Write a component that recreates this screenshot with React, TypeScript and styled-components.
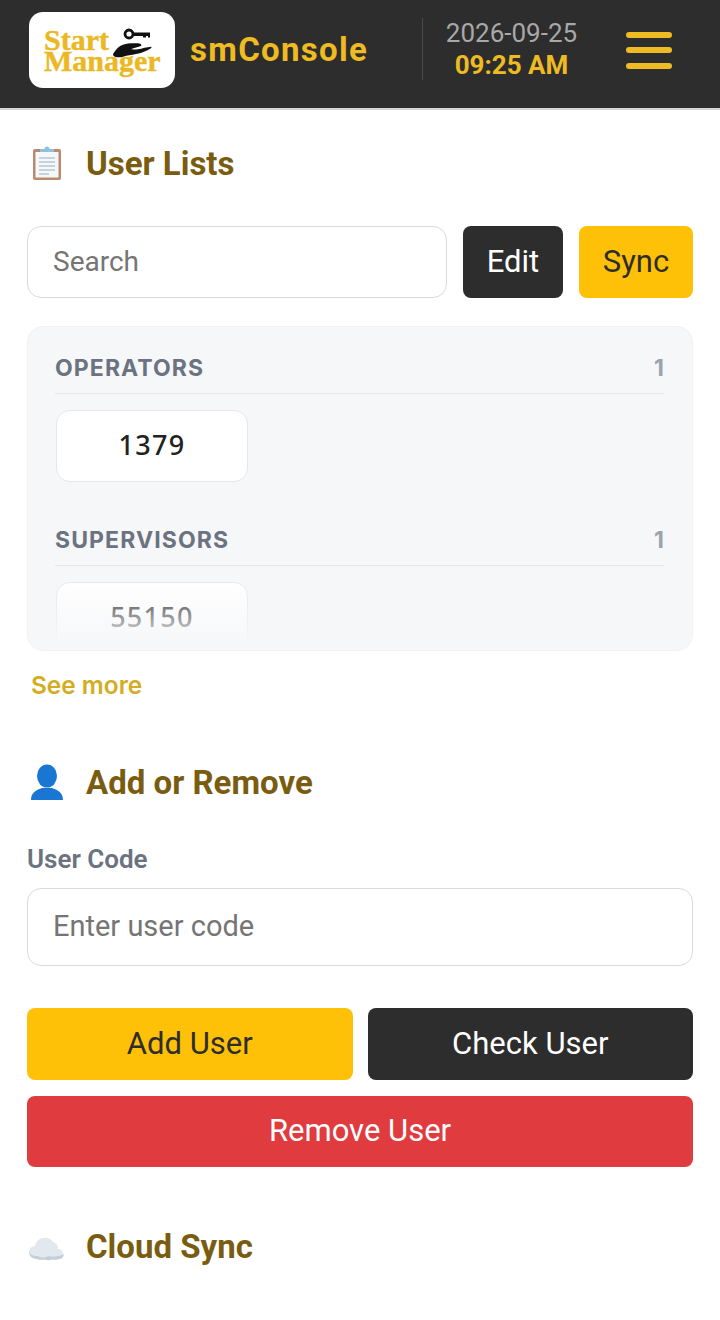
import styled, { createGlobalStyle } from 'styled-components';

const GlobalStyle = createGlobalStyle`
  * {
    box-sizing: border-box;
  }

  html,
  body {
    margin: 0;
    background: #fff;
    font-family: Roboto, 'Liberation Sans', sans-serif;
  }

  input::placeholder {
    color: #757575;
    opacity: 1;
  }
`;

const Page = styled.div`
  width: 720px;
  height: 1320px;
  overflow: hidden;
  background: #fff;
`;

const Header = styled.header`
  display: flex;
  align-items: center;
  height: 110px;
  padding: 0 48px 8px 29px;
  background: #2d2d2d;
  border-bottom: 2px solid #d4d4d4;
`;

const LogoBox = styled.div`
  position: relative;
  flex: none;
  width: 146px;
  height: 76px;
  background: #fff;
  border-radius: 14px;
`;

const LogoLine = styled.span<{ $top: number }>`
  position: absolute;
  top: ${(p) => p.$top}px;
  left: 15px;
  font-family: 'Liberation Serif', serif;
  font-weight: 700;
  font-size: 30px;
  line-height: 21px;
  color: #ebb823;
  -webkit-text-stroke: 0.4px #ebb823;
  white-space: nowrap;
`;

const LogoArt = styled.svg`
  position: absolute;
  top: 15px;
  left: 84px;
`;

const AppName = styled.div`
  flex: none;
  width: 232px;
  margin-left: 15px;
  padding-bottom: 2px;
  font-size: 33px;
  font-weight: 700;
  letter-spacing: 1.3px;
  color: #eebb22;
`;

const DateBlock = styled.div`
  flex: none;
  display: flex;
  flex-direction: column;
  align-items: center;
  width: 178px;
  height: 62px;
  margin-bottom: 2px;
  border-left: 1px solid #4a4a4a;
  line-height: 31px;
`;

const DateText = styled.span`
  font-size: 26px;
  color: #a8a8a8;
`;

const TimeText = styled.span`
  font-size: 26px;
  font-weight: 700;
  color: #eebb22;
  margin-top: 1px;
`;

const MenuIcon = styled.div`
  flex: none;
  display: flex;
  flex-direction: column;
  gap: 9.5px;
  width: 46px;
  margin-left: auto;
`;

const MenuBar = styled.span`
  height: 6px;
  border-radius: 3px;
  background: #eebb22;
`;

const Content = styled.main`
  padding: 0 27px;
`;

const SectionHead = styled.div<{ $top: number }>`
  display: flex;
  align-items: center;
  gap: 23px;
  height: 40px;
  margin-top: ${(p) => p.$top}px;
`;

const SectionIcon = styled.svg`
  flex: none;
  width: 36px;
  height: 38px;
  overflow: visible;
`;

const SectionTitle = styled.h2`
  margin: 0;
  font-size: 33px;
  font-weight: 700;
  color: #7a5c10;
`;

const Toolbar = styled.div`
  display: flex;
  gap: 16px;
  margin-top: 43px;
`;

const TextField = styled.input<{ $height: number; $size: number }>`
  flex: 1;
  min-width: 0;
  width: 100%;
  height: ${(p) => p.$height}px;
  padding: 0 25px 2px;
  border: 1px solid #d6d9de;
  border-radius: 14px;
  background: #fff;
  font-family: inherit;
  font-size: ${(p) => p.$size}px;
  color: #333;
  outline: none;
`;

const variants = {
  dark: 'background: #2d2d2d; color: #fff;',
  yellow: 'background: #ffc107; color: #2d2d2d;',
  red: 'background: #e03b3e; color: #fff;',
};

const Button = styled.button<{ $variant: keyof typeof variants; $width?: number }>`
  flex: ${(p) => (p.$width ? 'none' : '1')};
  width: ${(p) => (p.$width ? `${p.$width}px` : 'auto')};
  height: 72px;
  padding: 0 0 2px;
  border: none;
  border-radius: 8px;
  font-family: inherit;
  font-size: 31px;
  ${(p) => variants[p.$variant]}
`;

const ListPanel = styled.section`
  position: relative;
  height: 325px;
  margin-top: 28px;
  padding: 20px 28px 0 27px;
  overflow: hidden;
  background: #f6f7f9;
  border: 1px solid #f1f2f4;
  border-radius: 16px;

  &::after {
    content: '';
    position: absolute;
    left: 0;
    right: 0;
    bottom: 0;
    height: 70px;
    background: linear-gradient(to bottom, rgba(246, 247, 249, 0), #f6f7f9 95%);
  }
`;

const GroupHead = styled.div<{ $top?: number }>`
  display: flex;
  align-items: center;
  justify-content: space-between;
  height: 47px;
  margin-top: ${(p) => p.$top ?? 0}px;
  padding-bottom: 5px;
  border-bottom: 1px solid #e5e7eb;
  font-family: Inter, sans-serif;
  font-size: 23px;
  font-weight: 700;
  letter-spacing: 1.1px;
  color: #6b7280;
`;

const GroupCount = styled.span`
  color: #9ca3af;
  letter-spacing: 0;
`;

const Chip = styled.div`
  display: flex;
  align-items: center;
  justify-content: center;
  width: 192px;
  height: 72px;
  margin: 16px 0 0 1px;
  padding-bottom: 4px;
  background: #fff;
  border: 1px solid #e5e7eb;
  border-radius: 14px;
  font-family: 'Noto Sans', sans-serif;
  font-size: 27px;
  font-weight: 500;
  letter-spacing: 1.3px;
  color: #222;
`;

const SeeMore = styled.div`
  margin: 18px 0 0 4px;
  font-family: Inter, sans-serif;
  font-size: 24.4px;
  font-weight: 600;
  line-height: 32px;
  color: #d4ac1e;
`;

const FieldLabel = styled.label`
  display: block;
  margin-top: 41px;
  margin-bottom: 13px;
  font-size: 26px;
  font-weight: 600;
  line-height: 32px;
  color: #6b7280;
`;

const ButtonRow = styled.div`
  display: flex;
  gap: 15px;
  margin-top: 42px;
`;

const RemoveButton = styled(Button)`
  display: block;
  width: 100%;
  height: 71px;
  margin-top: 16px;
`;

function ClipboardIcon() {
  return (
    <SectionIcon viewBox="0 0 36 38">
      <rect x="6" y="5" width="28" height="31" rx="2" fill="#b98a6d" />
      <rect x="8.500" y="8" width="23" height="25.500" fill="#f4f8fb" />
      <path d="M12 14h16M12 18h16M12 22h16M12 26h16M12 30h10" stroke="#b7c6d6" strokeWidth="1.300" />
      <path d="M13 8V5h4.500a2.500 2.500 0 0 1 5 0H27v3z" fill="#8fc0dc" />
    </SectionIcon>
  );
}

function PersonIcon() {
  return (
    <SectionIcon viewBox="0 0 36 38">
      <ellipse cx="20" cy="13" rx="10" ry="11.500" fill="#1976d2" />
      <path d="M4 37c0-8 6-10 11-12h10c5 2 11 4 11 12z" fill="#1976d2" />
    </SectionIcon>
  );
}

function CloudIcon() {
  return (
    <SectionIcon viewBox="0 0 36 38">
      <path
        d="M7 31a6 6 0 0 1-5-6 6 6 0 0 1 6-6 10 10 0 0 1 18-4 7 7 0 0 1 5 7 5 5 0 0 1 5 5 4 4 0 0 1-4 4c-3 1-5 1-7 .500-2 1-5 1-7 0-3 .500-6 .500-11-.500z"
        fill="#e2e8ee"
      />
      <path d="M2 25c2 4 6 4 9 4 3 2 7 2 10 0 4 1 11 1 16-2-.500 3-2 5-5 5-3 1-5 1-7 .500-2 1-5 1-7 0-3 .500-6 .500-11-1-3-1-5-3-5-6.500z" fill="#c3ced8" />
    </SectionIcon>
  );
}

export default function App() {
  return (
    <Page>
      <GlobalStyle />
      <Header>
        <LogoBox>
          <LogoLine $top={17}>Start</LogoLine>
          <LogoLine $top={38}>Manager</LogoLine>
          <LogoArt width="50" height="44" viewBox="0 0 50 44">
            <circle cx="16" cy="7" r="4" fill="none" stroke="#111" strokeWidth="2.800" />
            <path d="M20 5.500h17v5h-2V9h-2v1.500h-3V9H20z" fill="#111" />
            <path d="M0 27C3 22 6 19 10 17.700 15 16 20 16 25 16.300 27 16.500 29 17.500 28.300 18.700 25 20 21 21 18.300 22 21 23 23 22.500 25 22.300 29 21.500 34 20 38.300 19.700 39 20.500 38 21.500 36.700 22 33 24 30 25.500 26.700 26.300 22 27.500 17 28 13.300 28.700 11 29.500 9 30.300 6.700 30.300 3 30.300 0 30 0 27z" fill="#111" />
          </LogoArt>
        </LogoBox>
        <AppName>smConsole</AppName>
        <DateBlock>
          <DateText>2026-09-25</DateText>
          <TimeText>09:25 AM</TimeText>
        </DateBlock>
        <MenuIcon>
          <MenuBar />
          <MenuBar />
          <MenuBar />
        </MenuIcon>
      </Header>

      <Content>
        <SectionHead $top={33}>
          <ClipboardIcon />
          <SectionTitle>User Lists</SectionTitle>
        </SectionHead>

        <Toolbar>
          <TextField $height={72} $size={28} placeholder="Search" />
          <Button $variant="dark" $width={100}>Edit</Button>
          <Button $variant="yellow" $width={114}>Sync</Button>
        </Toolbar>

        <ListPanel>
          <GroupHead>
            <span>OPERATORS</span>
            <GroupCount>1</GroupCount>
          </GroupHead>
          <Chip>1379</Chip>
          <GroupHead $top={37}>
            <span>SUPERVISORS</span>
            <GroupCount>1</GroupCount>
          </GroupHead>
          <Chip>55150</Chip>
        </ListPanel>

        <SeeMore>See more</SeeMore>

        <SectionHead $top={61}>
          <PersonIcon />
          <SectionTitle>Add or Remove</SectionTitle>
        </SectionHead>

        <FieldLabel>User Code</FieldLabel>
        <TextField $height={78} $size={29} placeholder="Enter user code" />

        <ButtonRow>
          <Button $variant="yellow">Add User</Button>
          <Button $variant="dark">Check User</Button>
        </ButtonRow>
        <RemoveButton $variant="red">Remove User</RemoveButton>

        <SectionHead $top={59}>
          <CloudIcon />
          <SectionTitle>Cloud Sync</SectionTitle>
        </SectionHead>
      </Content>
    </Page>
  );
}
